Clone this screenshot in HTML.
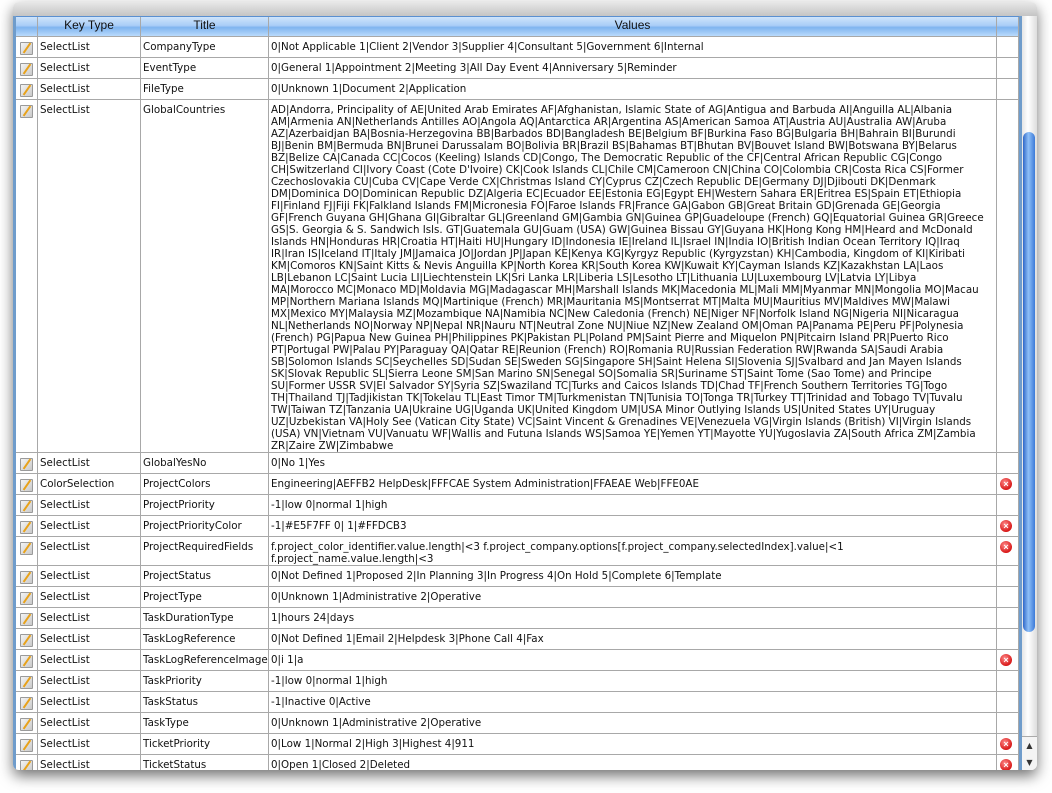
<!DOCTYPE html>
<html><head><meta charset="utf-8"><style>
html,body{margin:0;padding:0;background:#fff;width:1052px;height:793px;overflow:hidden}
#win{position:absolute;left:13px;top:2px;width:1024px;height:768px;border-radius:6px;overflow:hidden;background:#fff;box-shadow:0 6px 14px rgba(0,0,0,.55);}
#top{position:absolute;left:0;top:0;width:1024px;height:14px;background:linear-gradient(#e8e8e8,#c4c4c4);border-bottom:1px solid #888}
#lb{position:absolute;left:0;top:14px;width:3px;height:754px;background:#6f9ccb}
#grid{position:absolute;left:3px;top:14px;width:1003px;}
.r{position:absolute;left:0;width:1003px;display:flex;border-bottom:1px solid #a8a8a8;box-sizing:border-box;font-family:"DejaVu Sans","Liberation Sans",sans-serif;font-size:10.3px;color:#111;line-height:12px}
.r>div{border-right:1px solid #a8a8a8;box-sizing:border-box;padding:4px 0 0 2px;overflow:hidden;white-space:nowrap}
.c0{width:22px}.c1{width:103px}.c2{width:128px}.c3{width:728px}.c4{width:22px}
.hd{background:linear-gradient(#cfe4fb 0%,#a9cdf7 45%,#7fb4ef 55%,#b9dafc 100%);border-top:1px solid #5a8fd0;font-family:"Liberation Sans",sans-serif;font-size:12px;text-align:center}
.hd>div{padding:2px 0 0 0}
.ed{display:block;width:11px;height:11px;margin:1px 0 0 2px;background:linear-gradient(135deg,#f4f4f4,#c9c9c9);border:1px solid #9a9a9a;border-radius:1px;position:relative}
.ed:after{content:"";position:absolute;left:5px;top:-1px;width:2px;height:12px;background:#e8a21a;transform:rotate(35deg)}
.x{display:block;width:12px;height:12px;border-radius:50%;background:radial-gradient(circle at 40% 35%,#ff8a8a,#d81818 70%);margin:4px 0 0 3px;color:#fff;font:bold 9px/12px "Liberation Sans",sans-serif;text-align:center}
#sb{position:absolute;left:1006px;top:14px;width:18px;height:754px;background:linear-gradient(90deg,#e6e6e6,#fff 40%,#ddd);border-left:3px solid #6f9ccb;box-sizing:border-box}
#th{position:absolute;left:1px;top:116px;width:12px;height:500px;border-radius:6px;background:linear-gradient(90deg,#2f68c8,#8fc0f8 45%,#3c7ad8);}
#ar{position:absolute;left:0;top:720px;width:15px;height:34px;background:#f4f4f4;border-top:1px solid #aaa;font:8px/17px "DejaVu Sans",sans-serif;text-align:center;color:#333}
</style></head><body>
<div id="win">
<div id="top"></div><div id="lb"></div>
<div id="grid">
<div class="r hd" style="top:0;height:21px"><div class="c0"></div><div class="c1">Key Type</div><div class="c2">Title</div><div class="c3">Values</div><div class="c4"></div></div>
<div class="r" style="top:21px;height:21px"><div class="c0"><i class="ed"></i></div><div class="c1">SelectList</div><div class="c2">CompanyType</div><div class="c3">0|Not Applicable 1|Client 2|Vendor 3|Supplier 4|Consultant 5|Government 6|Internal</div><div class="c4"></div></div>
<div class="r" style="top:42px;height:21px"><div class="c0"><i class="ed"></i></div><div class="c1">SelectList</div><div class="c2">EventType</div><div class="c3">0|General 1|Appointment 2|Meeting 3|All Day Event 4|Anniversary 5|Reminder</div><div class="c4"></div></div>
<div class="r" style="top:63px;height:21px"><div class="c0"><i class="ed"></i></div><div class="c1">SelectList</div><div class="c2">FileType</div><div class="c3">0|Unknown 1|Document 2|Application</div><div class="c4"></div></div>
<div class="r" style="top:84px;height:353px"><div class="c0"><i class="ed"></i></div><div class="c1">SelectList</div><div class="c2">GlobalCountries</div><div class="c3">AD|Andorra, Principality of AE|United Arab Emirates AF|Afghanistan, Islamic State of AG|Antigua and Barbuda AI|Anguilla AL|Albania<br>AM|Armenia AN|Netherlands Antilles AO|Angola AQ|Antarctica AR|Argentina AS|American Samoa AT|Austria AU|Australia AW|Aruba<br>AZ|Azerbaidjan BA|Bosnia-Herzegovina BB|Barbados BD|Bangladesh BE|Belgium BF|Burkina Faso BG|Bulgaria BH|Bahrain BI|Burundi<br>BJ|Benin BM|Bermuda BN|Brunei Darussalam BO|Bolivia BR|Brazil BS|Bahamas BT|Bhutan BV|Bouvet Island BW|Botswana BY|Belarus<br>BZ|Belize CA|Canada CC|Cocos (Keeling) Islands CD|Congo, The Democratic Republic of the CF|Central African Republic CG|Congo<br>CH|Switzerland CI|Ivory Coast (Cote D'Ivoire) CK|Cook Islands CL|Chile CM|Cameroon CN|China CO|Colombia CR|Costa Rica CS|Former<br>Czechoslovakia CU|Cuba CV|Cape Verde CX|Christmas Island CY|Cyprus CZ|Czech Republic DE|Germany DJ|Djibouti DK|Denmark<br>DM|Dominica DO|Dominican Republic DZ|Algeria EC|Ecuador EE|Estonia EG|Egypt EH|Western Sahara ER|Eritrea ES|Spain ET|Ethiopia<br>FI|Finland FJ|Fiji FK|Falkland Islands FM|Micronesia FO|Faroe Islands FR|France GA|Gabon GB|Great Britain GD|Grenada GE|Georgia<br>GF|French Guyana GH|Ghana GI|Gibraltar GL|Greenland GM|Gambia GN|Guinea GP|Guadeloupe (French) GQ|Equatorial Guinea GR|Greece<br>GS|S. Georgia &amp; S. Sandwich Isls. GT|Guatemala GU|Guam (USA) GW|Guinea Bissau GY|Guyana HK|Hong Kong HM|Heard and McDonald<br>Islands HN|Honduras HR|Croatia HT|Haiti HU|Hungary ID|Indonesia IE|Ireland IL|Israel IN|India IO|British Indian Ocean Territory IQ|Iraq<br>IR|Iran IS|Iceland IT|Italy JM|Jamaica JO|Jordan JP|Japan KE|Kenya KG|Kyrgyz Republic (Kyrgyzstan) KH|Cambodia, Kingdom of KI|Kiribati<br>KM|Comoros KN|Saint Kitts &amp; Nevis Anguilla KP|North Korea KR|South Korea KW|Kuwait KY|Cayman Islands KZ|Kazakhstan LA|Laos<br>LB|Lebanon LC|Saint Lucia LI|Liechtenstein LK|Sri Lanka LR|Liberia LS|Lesotho LT|Lithuania LU|Luxembourg LV|Latvia LY|Libya<br>MA|Morocco MC|Monaco MD|Moldavia MG|Madagascar MH|Marshall Islands MK|Macedonia ML|Mali MM|Myanmar MN|Mongolia MO|Macau<br>MP|Northern Mariana Islands MQ|Martinique (French) MR|Mauritania MS|Montserrat MT|Malta MU|Mauritius MV|Maldives MW|Malawi<br>MX|Mexico MY|Malaysia MZ|Mozambique NA|Namibia NC|New Caledonia (French) NE|Niger NF|Norfolk Island NG|Nigeria NI|Nicaragua<br>NL|Netherlands NO|Norway NP|Nepal NR|Nauru NT|Neutral Zone NU|Niue NZ|New Zealand OM|Oman PA|Panama PE|Peru PF|Polynesia<br>(French) PG|Papua New Guinea PH|Philippines PK|Pakistan PL|Poland PM|Saint Pierre and Miquelon PN|Pitcairn Island PR|Puerto Rico<br>PT|Portugal PW|Palau PY|Paraguay QA|Qatar RE|Reunion (French) RO|Romania RU|Russian Federation RW|Rwanda SA|Saudi Arabia<br>SB|Solomon Islands SC|Seychelles SD|Sudan SE|Sweden SG|Singapore SH|Saint Helena SI|Slovenia SJ|Svalbard and Jan Mayen Islands<br>SK|Slovak Republic SL|Sierra Leone SM|San Marino SN|Senegal SO|Somalia SR|Suriname ST|Saint Tome (Sao Tome) and Principe<br>SU|Former USSR SV|El Salvador SY|Syria SZ|Swaziland TC|Turks and Caicos Islands TD|Chad TF|French Southern Territories TG|Togo<br>TH|Thailand TJ|Tadjikistan TK|Tokelau TL|East Timor TM|Turkmenistan TN|Tunisia TO|Tonga TR|Turkey TT|Trinidad and Tobago TV|Tuvalu<br>TW|Taiwan TZ|Tanzania UA|Ukraine UG|Uganda UK|United Kingdom UM|USA Minor Outlying Islands US|United States UY|Uruguay<br>UZ|Uzbekistan VA|Holy See (Vatican City State) VC|Saint Vincent &amp; Grenadines VE|Venezuela VG|Virgin Islands (British) VI|Virgin Islands<br>(USA) VN|Vietnam VU|Vanuatu WF|Wallis and Futuna Islands WS|Samoa YE|Yemen YT|Mayotte YU|Yugoslavia ZA|South Africa ZM|Zambia<br>ZR|Zaire ZW|Zimbabwe</div><div class="c4"></div></div>
<div class="r" style="top:437px;height:21px"><div class="c0"><i class="ed"></i></div><div class="c1">SelectList</div><div class="c2">GlobalYesNo</div><div class="c3">0|No 1|Yes</div><div class="c4"></div></div>
<div class="r" style="top:458px;height:21px"><div class="c0"><i class="ed"></i></div><div class="c1">ColorSelection</div><div class="c2">ProjectColors</div><div class="c3">Engineering|AEFFB2 HelpDesk|FFFCAE System Administration|FFAEAE Web|FFE0AE</div><div class="c4" style="padding:0"><i class="x">×</i></div></div>
<div class="r" style="top:479px;height:21px"><div class="c0"><i class="ed"></i></div><div class="c1">SelectList</div><div class="c2">ProjectPriority</div><div class="c3">-1|low 0|normal 1|high</div><div class="c4"></div></div>
<div class="r" style="top:500px;height:21px"><div class="c0"><i class="ed"></i></div><div class="c1">SelectList</div><div class="c2">ProjectPriorityColor</div><div class="c3">-1|#E5F7FF 0| 1|#FFDCB3</div><div class="c4" style="padding:0"><i class="x">×</i></div></div>
<div class="r" style="top:521px;height:29px"><div class="c0"><i class="ed"></i></div><div class="c1">SelectList</div><div class="c2">ProjectRequiredFields</div><div class="c3">f.project_color_identifier.value.length|&lt;3 f.project_company.options[f.project_company.selectedIndex].value|&lt;1<br>f.project_name.value.length|&lt;3</div><div class="c4" style="padding:0"><i class="x">×</i></div></div>
<div class="r" style="top:550px;height:21px"><div class="c0"><i class="ed"></i></div><div class="c1">SelectList</div><div class="c2">ProjectStatus</div><div class="c3">0|Not Defined 1|Proposed 2|In Planning 3|In Progress 4|On Hold 5|Complete 6|Template</div><div class="c4"></div></div>
<div class="r" style="top:571px;height:21px"><div class="c0"><i class="ed"></i></div><div class="c1">SelectList</div><div class="c2">ProjectType</div><div class="c3">0|Unknown 1|Administrative 2|Operative</div><div class="c4"></div></div>
<div class="r" style="top:592px;height:21px"><div class="c0"><i class="ed"></i></div><div class="c1">SelectList</div><div class="c2">TaskDurationType</div><div class="c3">1|hours 24|days</div><div class="c4"></div></div>
<div class="r" style="top:613px;height:21px"><div class="c0"><i class="ed"></i></div><div class="c1">SelectList</div><div class="c2">TaskLogReference</div><div class="c3">0|Not Defined 1|Email 2|Helpdesk 3|Phone Call 4|Fax</div><div class="c4"></div></div>
<div class="r" style="top:634px;height:21px"><div class="c0"><i class="ed"></i></div><div class="c1">SelectList</div><div class="c2">TaskLogReferenceImage</div><div class="c3">0|i 1|a</div><div class="c4" style="padding:0"><i class="x">×</i></div></div>
<div class="r" style="top:655px;height:21px"><div class="c0"><i class="ed"></i></div><div class="c1">SelectList</div><div class="c2">TaskPriority</div><div class="c3">-1|low 0|normal 1|high</div><div class="c4"></div></div>
<div class="r" style="top:676px;height:21px"><div class="c0"><i class="ed"></i></div><div class="c1">SelectList</div><div class="c2">TaskStatus</div><div class="c3">-1|Inactive 0|Active</div><div class="c4"></div></div>
<div class="r" style="top:697px;height:21px"><div class="c0"><i class="ed"></i></div><div class="c1">SelectList</div><div class="c2">TaskType</div><div class="c3">0|Unknown 1|Administrative 2|Operative</div><div class="c4"></div></div>
<div class="r" style="top:718px;height:21px"><div class="c0"><i class="ed"></i></div><div class="c1">SelectList</div><div class="c2">TicketPriority</div><div class="c3">0|Low 1|Normal 2|High 3|Highest 4|911</div><div class="c4" style="padding:0"><i class="x">×</i></div></div>
<div class="r" style="top:739px;height:21px"><div class="c0"><i class="ed"></i></div><div class="c1">SelectList</div><div class="c2">TicketStatus</div><div class="c3">0|Open 1|Closed 2|Deleted</div><div class="c4" style="padding:0"><i class="x">×</i></div></div>
</div>
<div id="sb"><div id="th"></div><div id="ar">▲<br>▼</div></div>
</div>
</body></html>
